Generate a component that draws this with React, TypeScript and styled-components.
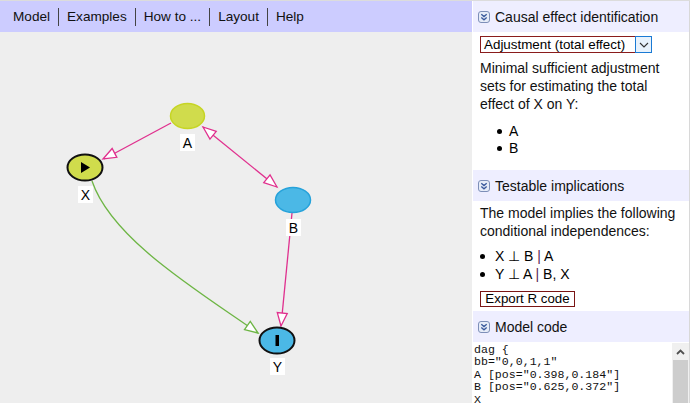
import React from 'react';
import styled, { createGlobalStyle } from 'styled-components';

const GlobalStyle = createGlobalStyle`
  html, body {
    margin: 0;
    padding: 0;
    background: #ffffff;
  }
  body {
    font-family: "Liberation Sans", Arial, sans-serif;
    color: #000;
  }
`;

type Pt = [number, number];

const PINK = '#e0308e';
const GREEN = '#6db544';

function arrowHead(tip: Pt, from: Pt, len = 13, half = 5) {
  const dx = tip[0] - from[0];
  const dy = tip[1] - from[1];
  const d = Math.sqrt(dx * dx + dy * dy);
  const ux = dx / d;
  const uy = dy / d;
  const bx = tip[0] - ux * len;
  const by = tip[1] - uy * len;
  const p1 = [bx - uy * half, by + ux * half];
  const p2 = [bx + uy * half, by - ux * half];
  return `${tip[0]},${tip[1]} ${p1[0]},${p1[1]} ${p2[0]},${p2[1]}`;
}

const menuItems = ['Model', 'Examples', 'How to ...', 'Layout', 'Help'];

const codeLines = [
  'dag {',
  'bb="0,0,1,1"',
  'A [pos="0.398,0.184"]',
  'B [pos="0.625,0.372"]',
  'X',
];

function HeaderIcon() {
  return (
    <svg width="12" height="12" viewBox="0 0 12 12">
      <rect x="0.5" y="0.5" width="11" height="11" rx="2.5" fill="#e6ecf8" stroke="#7d8fb8" />
      <path d="M3.3 3.2 L6 5.6 L8.7 3.2 M3.3 6.4 L6 8.8 L8.7 6.4" fill="none" stroke="#3a5a9c" strokeWidth="1.3" />
    </svg>
  );
}

function Section({ title, children }: { title: string; children?: React.ReactNode }) {
  return (
    <>
      <SectionHeader>
        <HeaderIcon />
        <span>{title}</span>
      </SectionHeader>
      {children}
    </>
  );
}

function Graph() {
  return (
    <svg width="472" height="371" viewBox="0 32 472 371">
      {/* edges */}
      <g fill="none" strokeWidth="1.3">
        <line x1="171" y1="123" x2="104" y2="159" stroke={PINK} />
        <line x1="203" y1="127" x2="277" y2="187" stroke={PINK} />
        <line x1="292" y1="213" x2="281" y2="326" stroke={PINK} />
        <path d="M92 181 C 112 240 200 292 258 333" stroke={GREEN} />
      </g>
      <g fill="#ffffff" strokeWidth="1.3">
        <polygon points={arrowHead([103, 159], [171, 123])} stroke={PINK} />
        <polygon points={arrowHead([203, 127], [277, 187])} stroke={PINK} />
        <polygon points={arrowHead([277, 187], [203, 127])} stroke={PINK} />
        <polygon points={arrowHead([281, 326], [292, 213])} stroke={PINK} />
        <polygon points={arrowHead([258, 333], [200, 292])} stroke={GREEN} />
      </g>

      {/* nodes */}
      <ellipse cx="187.5" cy="116" rx="17" ry="12.5" fill="#d0dc4c" stroke="#c6d524" strokeWidth="1.5" />
      <ellipse cx="85" cy="167.5" rx="17.5" ry="13" fill="#d0dc4c" stroke="#111" strokeWidth="2" />
      <polygon points="81,162 81,173 90,167.5" fill="#000" />
      <ellipse cx="293" cy="200" rx="17.5" ry="12.5" fill="#4bb8e6" stroke="#26a2da" strokeWidth="1.5" />
      <ellipse cx="277" cy="340.5" rx="17.5" ry="13" fill="#4bb8e6" stroke="#111" strokeWidth="2" />
      <rect x="275.5" y="335" width="3.5" height="11" fill="#000" />

      {/* labels */}
      <g fontFamily='"Liberation Sans", Arial, sans-serif' fontSize="14" textAnchor="middle">
        <rect x="180" y="134" width="15" height="17" fill="#fff" />
        <text x="187.5" y="147.5">A</text>
        <rect x="78" y="186" width="15" height="17" fill="#fff" />
        <text x="85.5" y="199.5">X</text>
        <rect x="286" y="219" width="15" height="17" fill="#fff" />
        <text x="293.5" y="232.5">B</text>
        <rect x="270" y="358" width="15" height="17" fill="#fff" />
        <text x="277.5" y="371.5">Y</text>
      </g>
    </svg>
  );
}

export default function App() {
  return (
    <>
      <GlobalStyle />
      <Page>
        <MainColumn>
          <MenuBar>
            {menuItems.map((item, i) => (
              <MenuItem key={item} first={i === 0}>
                {item}
              </MenuItem>
            ))}
          </MenuBar>
          <Canvas>
            <Graph />
          </Canvas>
        </MainColumn>

        <Sidebar>
          <Section title="Causal effect identification">
            <SectionBody>
              <SelectBox>
                <SelectText>Adjustment (total effect)</SelectText>
                <SelectButton>
                  <svg width="10" height="6" viewBox="0 0 10 6">
                    <path d="M1 1 L5 5 L9 1" fill="none" stroke="#333" strokeWidth="1.1" />
                  </svg>
                </SelectButton>
              </SelectBox>
              <Para gap={6}>
                Minimal sufficient adjustment sets for estimating the total effect of X on Y:
              </Para>
              <BulletList top={10} line={17} indent={17} gapX={7}>
                <li>A</li>
                <li>B</li>
              </BulletList>
            </SectionBody>
          </Section>

          <Spacer h={13} />

          <Section title="Testable implications">
            <SectionBody>
              <Para gap={3}>
                The model implies the following conditional independences:
              </Para>
              <BulletList top={7} line={18} indent={0} gapX={10}>
                <li>
                  X ⊥ B <Bar>|</Bar> A
                </li>
                <li>
                  Y ⊥ A <Bar>|</Bar> B, X
                </li>
              </BulletList>
              <ExportButton>Export R code</ExportButton>
            </SectionBody>
          </Section>

          <Spacer h={4} />

          <Section title="Model code">
            <CodeBox>
              <Code>{codeLines.join('\n')}</Code>
              <ScrollTrack>
                <ScrollUp>
                  <svg width="9" height="6" viewBox="0 0 9 6">
                    <path d="M1 5 L4.5 1.5 L8 5" fill="none" stroke="#505050" strokeWidth="1.8" />
                  </svg>
                </ScrollUp>
                <ScrollThumb />
              </ScrollTrack>
            </CodeBox>
          </Section>
        </Sidebar>
      </Page>
    </>
  );
}

const Page = styled.div`
  display: flex;
  width: 690px;
  height: 403px;
  overflow: hidden;
  border-top: 1px solid #dcdcdc;
  box-sizing: border-box;
`;

const MainColumn = styled.div`
  width: 472px;
  display: flex;
  flex-direction: column;
`;

const MenuBar = styled.div`
  height: 31px;
  background: #ccccff;
  display: flex;
  align-items: center;
  padding-left: 5px;
  font-size: 13.6px;
  color: #111;
`;

const MenuItem = styled.div<{ first?: boolean }>`
  padding: 0 8px;
  line-height: 18px;
  border-left: ${(p) => (p.first ? 'none' : '1px solid #444')};
`;

const Canvas = styled.div`
  flex: 1;
  background: #eeeeee;
  svg {
    display: block;
  }
`;

const Sidebar = styled.div`
  width: 216px;
  border-left: 1px solid #ffffff;
  border-right: 1px solid #d8d8d8;
  background: #ffffff;
  display: flex;
  flex-direction: column;
  font-size: 14px;
`;

const SectionHeader = styled.div`
  height: 31px;
  flex-shrink: 0;
  background: #eeeeff;
  display: flex;
  align-items: center;
  gap: 5px;
  padding-left: 5px;
  font-size: 14px;
  color: #111;
  svg {
    display: block;
  }
`;

const SectionBody = styled.div`
  padding: 0 6px 0 7px;
`;

const SelectBox = styled.div`
  margin-top: 4px;
  width: 172px;
  height: 17px;
  box-sizing: border-box;
  border: 1px solid #8a1c1c;
  display: flex;
  align-items: center;
  justify-content: space-between;
  font-size: 13.4px;
`;

const SelectText = styled.span`
  padding-left: 3px;
  line-height: 15px;
`;

const SelectButton = styled.div`
  width: 17px;
  height: 17px;
  margin: -1px -1px -1px 0;
  box-sizing: border-box;
  border: 1px solid #1a7ad4;
  background: #e8f2fc;
  display: flex;
  align-items: center;
  justify-content: center;
`;

const Para = styled.div<{ gap: number }>`
  margin-top: ${(p) => p.gap}px;
  line-height: 18px;
  color: #111;
`;

const BulletList = styled.ul<{ top: number; line: number; indent: number; gapX: number }>`
  margin: ${(p) => p.top}px 0 0 0;
  padding: 0 0 0 ${(p) => p.indent}px;
  list-style: none;
  li {
    display: flex;
    align-items: center;
    height: ${(p) => p.line}px;
    line-height: ${(p) => p.line}px;
    white-space: pre;
  }
  li::before {
    content: '';
    width: 5px;
    height: 5px;
    border-radius: 50%;
    background: #000;
    margin-right: ${(p) => p.gapX}px;
    flex-shrink: 0;
  }
`;

const Bar = styled.span`
  color: #5a1f55;
`;

const Spacer = styled.div<{ h: number }>`
  height: ${(p) => p.h}px;
  flex-shrink: 0;
`;

const ExportButton = styled.div`
  margin-top: 8px;
  width: 95px;
  height: 16px;
  box-sizing: border-box;
  border: 1px solid #7a1515;
  font-size: 13.3px;
  line-height: 14px;
  text-align: center;
`;

const CodeBox = styled.div`
  flex: 1;
  margin-top: 1px;
  display: flex;
  min-height: 0;
  overflow: hidden;
`;

const Code = styled.pre`
  flex: 1;
  margin: 0;
  padding: 1px 0 0 1px;
  font-family: "Liberation Mono", "Courier New", monospace;
  font-size: 11.6px;
  line-height: 12.4px;
  color: #111;
  overflow: hidden;
`;

const ScrollTrack = styled.div`
  width: 17px;
  display: flex;
  flex-direction: column;
  background: #f0f0f0;
`;

const ScrollUp = styled.div`
  height: 17px;
  display: flex;
  align-items: center;
  justify-content: center;
`;

const ScrollThumb = styled.div`
  flex: 1;
  margin: 0 1px;
  background: #cdcdcd;
`;
